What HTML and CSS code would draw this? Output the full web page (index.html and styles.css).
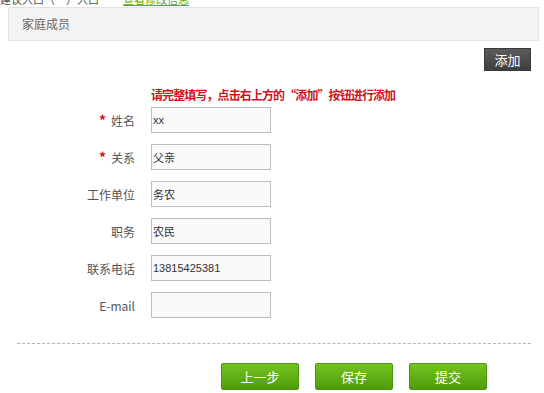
FILE: index.html
```html
<!DOCTYPE html>
<html lang="zh-CN">
<head>
  <meta charset="UTF-8">
  <meta name="viewport" content="width=device-width, initial-scale=1.0">
  <title>家庭成员</title>
  <link rel="stylesheet" href="styles.css">
</head>
<body>
  <div class="topline">
    <div class="topline-text">建议入口（一）入口<a href="#" class="topline-link">查看修改信息</a></div>
  </div>

  <div class="section-head">家庭成员</div>

  <div class="toolbar">
    <button class="add-button">添加</button>
  </div>

  <div class="notice">请完整填写，点击右上方的“添加”按钮进行添加</div>

  <form class="member-form">
    <div class="form-row">
      <label class="form-label"><span class="required">*</span>姓名</label>
      <input class="form-input" type="text" value="xx">
    </div>
    <div class="form-row">
      <label class="form-label"><span class="required">*</span>关系</label>
      <input class="form-input" type="text" value="父亲">
    </div>
    <div class="form-row">
      <label class="form-label">工作单位</label>
      <input class="form-input" type="text" value="务农">
    </div>
    <div class="form-row">
      <label class="form-label">职务</label>
      <input class="form-input" type="text" value="农民">
    </div>
    <div class="form-row">
      <label class="form-label">联系电话</label>
      <input class="form-input" type="text" value="13815425381">
    </div>
    <div class="form-row">
      <label class="form-label">E-mail</label>
      <input class="form-input" type="text" value="">
    </div>
  </form>

  <div class="divider"></div>

  <div class="actions">
    <button class="green-button">上一步</button>
    <button class="green-button">保存</button>
    <button class="green-button">提交</button>
  </div>
</body>
</html>
```

FILE: styles.css
```css
body {
  margin: 0;
  font-family: "Noto Sans CJK SC", "Noto Sans", sans-serif;
  font-size: 12px;
  color: #333;
  background-color: #fff;
}

.topline {
  height: 7px;
  overflow: hidden;
}

.topline-text {
  margin-top: -9px;
  line-height: 16px;
  font-size: 11px;
  color: #555;
}

.topline-link {
  color: #5aa81a;
  margin-left: 24px;
}

.section-head {
  margin: 0 5px 0 8px;
  height: 32px;
  line-height: 32px;
  padding-left: 13px;
  background-color: #f3f3f3;
  border: 1px solid #e2e2e2;
  color: #666;
  font-size: 12px;
}

.toolbar {
  display: flex;
  justify-content: flex-end;
  padding-right: 13px;
  margin-top: 7px;
}

.add-button {
  width: 47px;
  height: 23px;
  padding: 0;
  border: 1px solid #3a3a3a;
  background: linear-gradient(#5c5c5c, #3e3e3e);
  color: #fff;
  font-family: inherit;
  font-size: 13px;
  cursor: pointer;
}

.notice {
  margin-top: 16px;
  padding-left: 151px;
  color: #d0121b;
  font-weight: bold;
  font-size: 12px;
  line-height: 16px;
  letter-spacing: -0.9px;
}

.member-form {
  margin-top: 4px;
  display: flex;
  flex-direction: column;
  gap: 11px;
}

.form-row {
  display: flex;
  align-items: center;
  gap: 16px;
}

.form-label {
  width: 135px;
  text-align: right;
  font-size: 12px;
  color: #555;
}

.required {
  color: #d0121b;
  font-size: 14px;
  font-weight: bold;
  margin-right: 5px;
}

.form-input {
  box-sizing: border-box;
  width: 120px;
  height: 26px;
  padding: 0 1px;
  border: 1px solid #bdbdbd;
  background-color: #fafafa;
  font-family: "Liberation Sans", "Noto Sans CJK SC", sans-serif;
  font-size: 11px;
  color: #333;
}

.divider {
  margin: 25px 13px 0 17px;
  border-top: 1px dashed #b5b5b5;
}

.actions {
  display: flex;
  gap: 16px;
  padding-left: 221px;
  margin-top: 19px;
}

.green-button {
  width: 78px;
  height: 27px;
  padding: 0;
  border: 1px solid #4b9510;
  border-radius: 2px;
  background: linear-gradient(#74c41f, #4f9c0a);
  color: #fff;
  font-family: inherit;
  font-size: 13px;
  cursor: pointer;
}
```
